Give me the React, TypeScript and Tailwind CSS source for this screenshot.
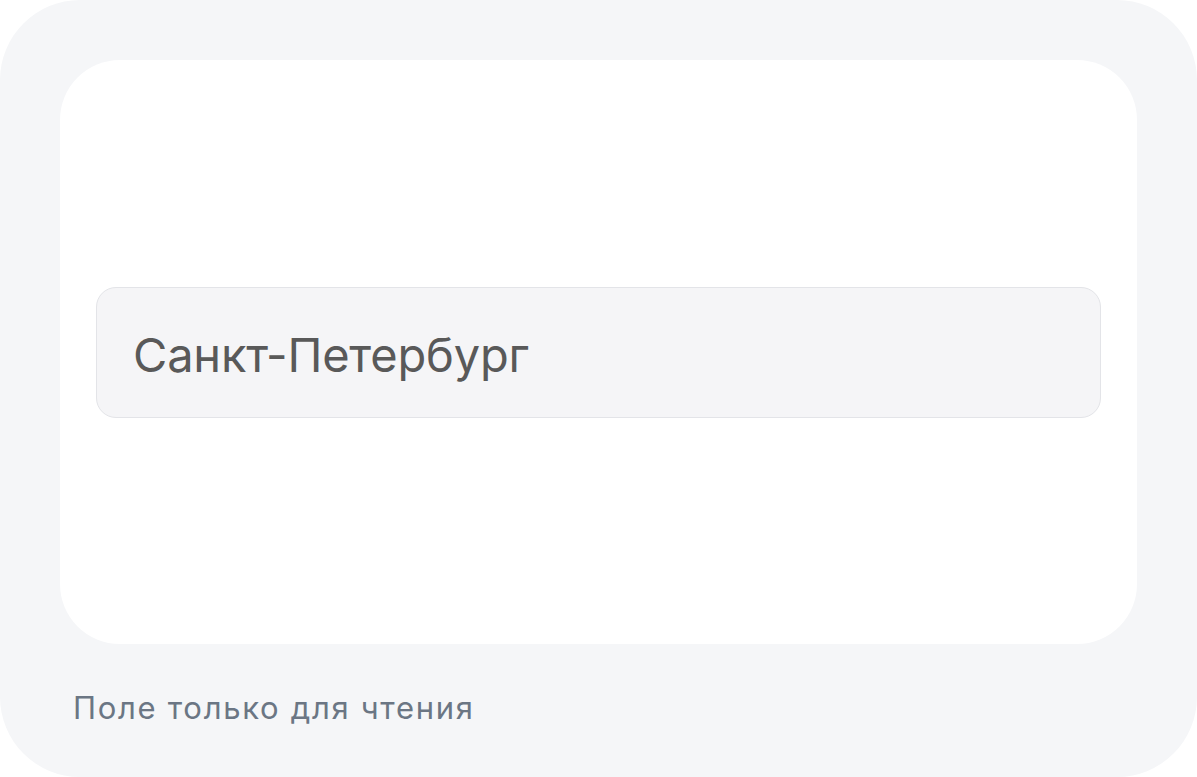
export default function App() {
  return (
    <div className="w-[1197px] h-[777px] bg-white">
      <div className="flex h-full w-full flex-col rounded-[80px] bg-[#f5f6f8] px-[60px] pt-[60px]">
        <div className="flex h-[584px] items-center rounded-[60px] bg-white px-[36px]">
          <ReadonlyField value="Санкт-Петербург" />
        </div>
        <div className="flex flex-1 items-center pl-[13px] pb-[5px]">
          <p className="font-['Inter',sans-serif] text-[31px] text-[#6b7684] tracking-[1.7px]">
            Поле только для чтения
          </p>
        </div>
      </div>
    </div>
  );
}

function ReadonlyField({ value }: { value: string }) {
  return (
    <div className="flex h-[131px] w-full items-center rounded-[20px] border border-[#e3e4e8] bg-[#f5f5f7] pl-[36px] pt-[6px]">
      <span className="font-['Inter',sans-serif] text-[47px] text-[#595959] tracking-[-0.2px]">{value}</span>
    </div>
  );
}
